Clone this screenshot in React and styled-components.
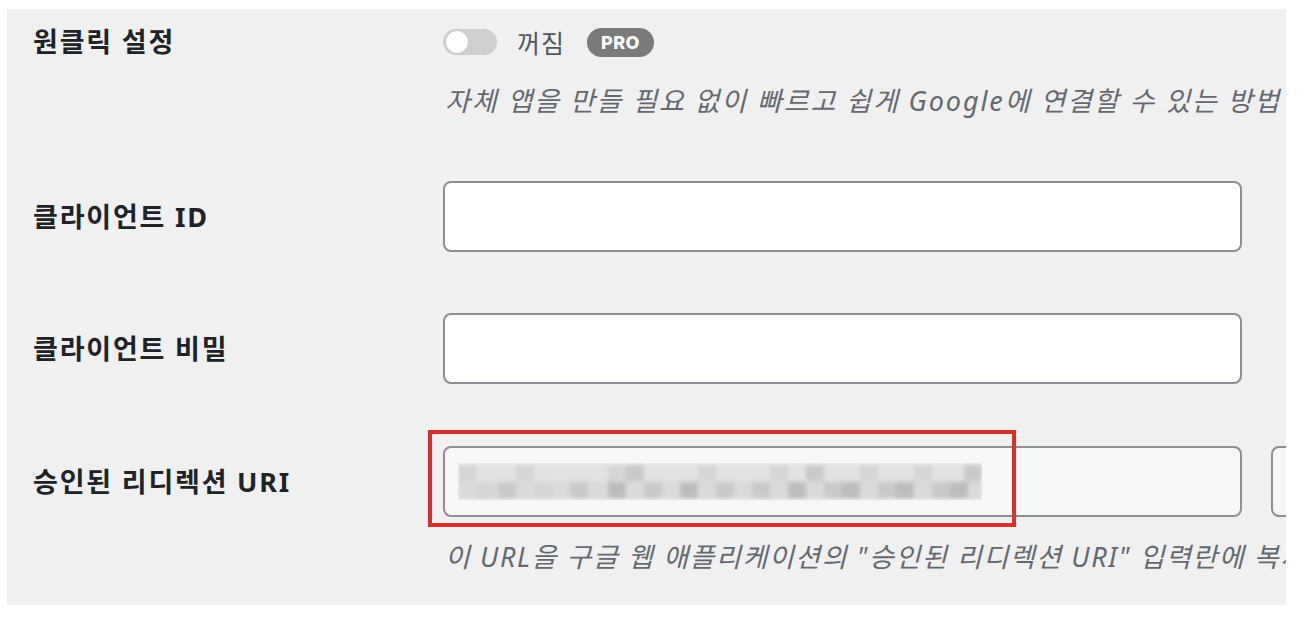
import React from "react";
import styled, { createGlobalStyle } from "styled-components";

const Global = createGlobalStyle`
  html, body { margin: 0; padding: 0; background: #ffffff; }
  body { font-family: "Noto Sans", "Noto Sans CJK KR", sans-serif; }
  * { box-sizing: border-box; }
`;

const Page = styled.div`
  padding: 9px 0 0 7px;
  width: 1306px;
  height: 622px;
`;

const Panel = styled.div`
  width: 1279px;
  height: 596px;
  background: #f0f0f1;
  overflow: hidden;
  padding-left: 26px;
`;

const Row = styled.div`
  display: grid;
  grid-template-columns: 410px 1200px;
  align-items: ${(p) => (p.$top ? "start" : "center")};
  margin-top: ${(p) => p.$mt}px;
`;

const Label = styled.div`
  font-family: "Noto Sans", "Noto Sans CJK KR", sans-serif;
  font-weight: 700;
  font-size: 27px;
  letter-spacing: 1.8px;
  line-height: 30px;
  color: #1d2327;
  white-space: nowrap;
`;

const Field = styled.div`
  display: flex;
  flex-direction: column;
`;

const ToggleLine = styled.div`
  display: flex;
  align-items: center;
  height: 30px;
`;

const Track = styled.span`
  width: 54px;
  height: 26px;
  border-radius: 13px;
  background: #cfcfd1;
  display: flex;
  align-items: center;
  padding-left: 3px;
`;

const Knob = styled.span`
  width: 22px;
  height: 22px;
  border-radius: 50%;
  background: #ffffff;
  box-shadow: 0 0 1px rgba(0, 0, 0, 0.2);
`;

const State = styled.span`
  margin-left: 20px;
  font-size: 25px;
  letter-spacing: 1px;
  color: #50575e;
  font-family: "Noto Sans CJK KR", sans-serif;
`;

const Badge = styled.span`
  margin-left: 22px;
  height: 29px;
  padding: 0 14px;
  border-radius: 15px;
  background: #7b7b7b;
  color: #ffffff;
  font-family: "Inter", "Liberation Sans", sans-serif;
  font-weight: 800;
  font-size: 18px;
  display: flex;
  align-items: center;
  letter-spacing: 0.4px;
`;

const Help = styled.div`
  margin-top: ${(p) => p.$mt}px;
  font-style: italic;
  font-size: 27px;
  letter-spacing: ${(p) => p.$ls}px;
  line-height: 36px;
  color: #646970;
  white-space: nowrap;
  padding-left: 2px;
`;

const InputRow = styled.div`
  display: flex;
  gap: 29px;
`;

const InputWrap = styled.div`
  position: relative;
`;

const Input = styled.div`
  width: ${(p) => p.$w}px;
  height: 71px;
  border: 2px solid #8c8f94;
  border-radius: 8px;
  background: ${(p) => (p.$readonly ? "#f6f7f7" : "#ffffff")};
  padding: 15px 0 0 13px;
`;

const Highlight = styled.div`
  position: absolute;
  left: -15px;
  top: -16px;
  width: 588px;
  height: 97px;
  border: 4px solid #d8312b;
  pointer-events: none;
`;

const blocks = [
  [0, 0, 0], [18, 1, 0], [40, 1, 1], [58, 0, 0], [76, 1, 0], [112, 1, 1], [150, 0, 0], [150, 1, 2],
  [168, 0, 1], [186, 1, 1], [222, 1, 2], [240, 0, 0], [258, 1, 1], [294, 1, 1], [312, 0, 0],
  [330, 1, 2], [348, 0, 1], [366, 1, 1], [384, 1, 2], [402, 0, 0], [420, 1, 1], [438, 1, 2],
  [456, 0, 0], [474, 1, 1], [492, 1, 2], [506, 0, 1],
];
const shades = ["#d6d6d6", "#c9c9c9", "#bdbdbd"];

function Blurred() {
  return (
    <svg width="524" height="37" viewBox="0 0 524 37">
      <defs>
        <filter id="bl" x="-5%" y="-30%" width="110%" height="160%">
          <feGaussianBlur stdDeviation="2.2" />
        </filter>
      </defs>
      <g filter="url(#bl)">
        <rect x="0" y="0" width="524" height="37" fill="#dadada" />
        <rect x="0" y="0" width="524" height="18" fill="#e3e3e3" />
        {blocks.map(([x, r, s], i) => (
          <rect key={i} x={x} y={r ? 19 : 2} width="18" height="16" fill={shades[s]} />
        ))}
      </g>
    </svg>
  );
}

export default function App() {
  return (
    <Page>
      <Global />
      <Panel>
        <Row $top $mt={18}>
          <Label>원클릭 설정</Label>
          <Field>
            <ToggleLine>
              <Track>
                <Knob />
              </Track>
              <State>꺼짐</State>
              <Badge>PRO</Badge>
            </ToggleLine>
            <Help $mt={26} $ls={1.9}>자체 앱을 만들 필요 없이 빠르고 쉽게 Google에 연결할 수 있는 방법</Help>
          </Field>
        </Row>
        <Row $mt={62}>
          <Label>클라이언트 ID</Label>
          <Field>
            <InputRow>
              <Input $w={799} />
            </InputRow>
          </Field>
        </Row>
        <Row $mt={61}>
          <Label>클라이언트 비밀</Label>
          <Field>
            <InputRow>
              <Input $w={799} />
            </InputRow>
          </Field>
        </Row>
        <Row $mt={62}>
          <Label>승인된 리디렉션 URI</Label>
          <Field>
            <InputRow>
              <InputWrap>
                <Input $w={799} $readonly>
                  <Blurred />
                </Input>
                <Highlight />
              </InputWrap>
              <Input $w={120} $readonly />
            </InputRow>
          </Field>
        </Row>
        <Row $top $mt={0}>
          <span />
          <Help $mt={22} $ls={1.6}>이 URL을 구글 웹 애플리케이션의 "승인된 리디렉션 URI" 입력란에 복사하여 붙여넣으세요.</Help>
        </Row>
      </Panel>
    </Page>
  );
}
